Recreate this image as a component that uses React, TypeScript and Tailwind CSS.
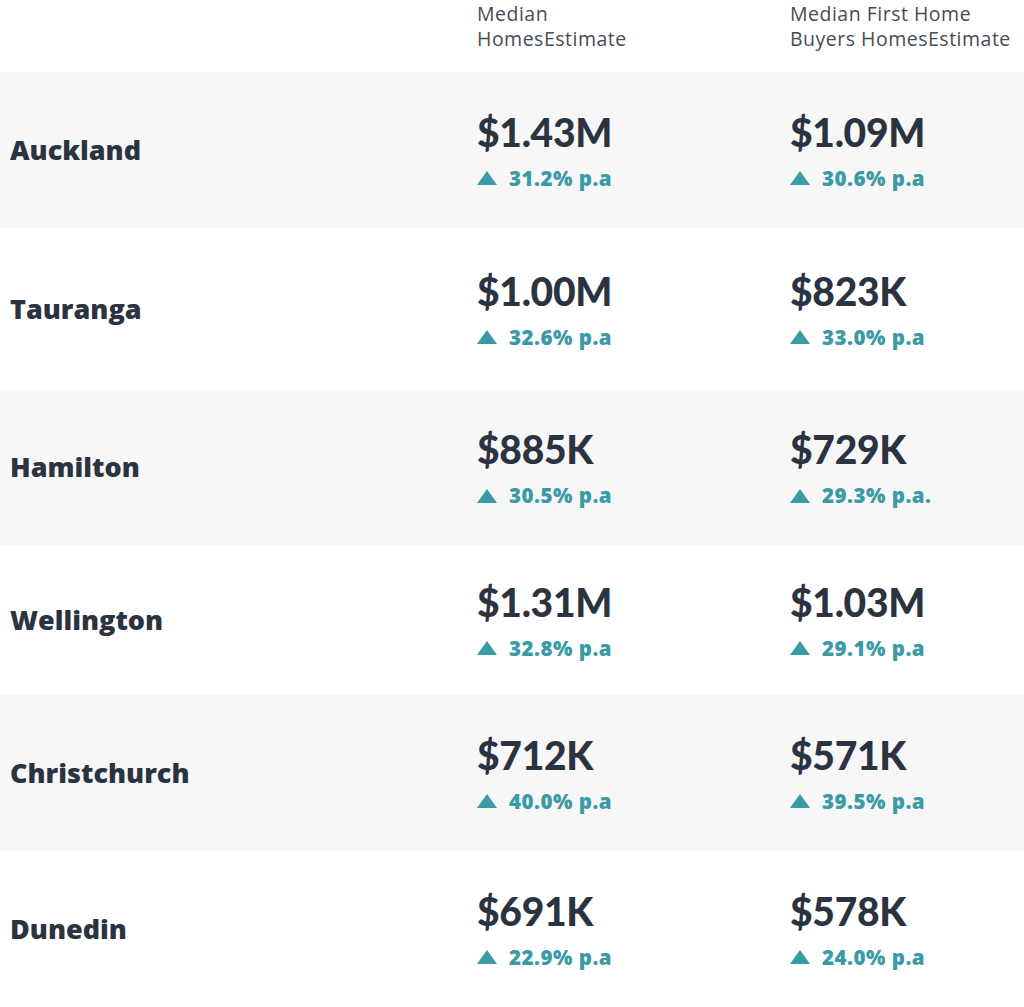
import React from "react";

type Row = { city: string; h: string; a: string; ap: string; b: string; bp: string; gray: boolean };

const rows: Row[] = [
  { city: "Auckland", h: "h-[156px]", a: "$1.43M", ap: "31.2% p.a", b: "$1.09M", bp: "30.6% p.a", gray: true },
  { city: "Tauranga", h: "h-[162px]", a: "$1.00M", ap: "32.6% p.a", b: "$823K", bp: "33.0% p.a", gray: false },
  { city: "Hamilton", h: "h-[155px]", a: "$885K", ap: "30.5% p.a", b: "$729K", bp: "29.3% p.a.", gray: true },
  { city: "Wellington", h: "h-[150px]", a: "$1.31M", ap: "32.8% p.a", b: "$1.03M", bp: "29.1% p.a", gray: false },
  { city: "Christchurch", h: "h-[156px]", a: "$712K", ap: "40.0% p.a", b: "$571K", bp: "39.5% p.a", gray: true },
  { city: "Dunedin", h: "h-[156px]", a: "$691K", ap: "22.9% p.a", b: "$578K", bp: "24.0% p.a", gray: false },
];

function Tri() {
  return (
    <svg width="20" height="14" viewBox="0 0 20 14" className="shrink-0">
      <polygon points="10,0 20,14 0,14" fill="#3a9aa6" />
    </svg>
  );
}

function Cell({ price, pct }: { price: string; pct: string }) {
  return (
    <div className="flex flex-col justify-center">
      <div className="text-[39px] leading-[44px] font-black text-[#2b3341] tracking-[-0.3px] [font-family:Lato,sans-serif]">{price}</div>
      <div className="flex items-center gap-[12px] mt-[12px] text-[20.5px] leading-[25px] font-extrabold tracking-[0.5px] text-[#3a9aa6] [font-family:'Open_Sans',sans-serif]">
        <Tri />
        <span>{pct}</span>
      </div>
    </div>
  );
}

export default function App() {
  return (
    <div className="w-[1024px] h-[1007px] bg-white overflow-hidden [font-family:'Open_Sans',sans-serif]">
      <div className="grid grid-cols-[477px_313px_1fr] h-[72px] text-[19.5px] leading-[25px] font-normal tracking-[0.5px] text-[#474c54]">
        <div />
        <div className="pt-[1px]">Median<br />HomesEstimate</div>
        <div className="pt-[1px]">Median First Home<br />Buyers HomesEstimate</div>
      </div>
      {rows.map((r) => (
        <div key={r.city} className={`grid grid-cols-[477px_313px_1fr] ${r.h} ${r.gray ? "bg-[#f7f7f7]" : "bg-white"}`}>
          <div className="flex items-center pl-[10px] text-[27px] font-extrabold text-[#2b3341]">{r.city}</div>
          <Cell price={r.a} pct={r.ap} />
          <Cell price={r.b} pct={r.bp} />
        </div>
      ))}
    </div>
  );
}
